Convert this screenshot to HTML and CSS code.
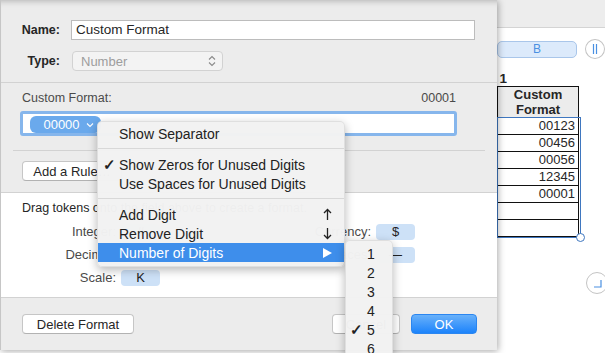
FILE: index.html
```html
<!DOCTYPE html>
<html lang="en">

<head>
  <meta charset="UTF-8">
  <title>Custom Format</title>
  <link rel="stylesheet" href="styles.css">
</head>

<body>
  <!-- spreadsheet behind the sheet -->
  <div class="canvas">
    <div class="toolbar"></div>
    <div class="col-row">
      <div class="col-pill">B</div>
      <div class="round-btn">
        <svg width="10" height="12" viewBox="0 0 10 12"><path d="M3.5 1v10M6.5 1v10" stroke="#4a90e2" stroke-width="1.2" fill="none"/></svg>
      </div>
    </div>
    <div class="table-title">Table 1</div>
    <div class="table-wrap">
      <table class="grid">
        <tr class="head"><td></td><td>Custom<br>Format</td></tr>
        <tr><td></td><td>00123</td></tr>
        <tr><td></td><td>00456</td></tr>
        <tr><td></td><td>00056</td></tr>
        <tr><td></td><td>12345</td></tr>
        <tr><td></td><td>00001</td></tr>
        <tr><td></td><td></td></tr>
        <tr><td></td><td></td></tr>
      </table>
      <div class="selection"><span class="handle"></span></div>
    </div>
    <div class="round-btn corner">
      <svg width="12" height="12" viewBox="0 0 12 12"><path d="M10 3v7H3" stroke="#4a90e2" stroke-width="1.2" fill="none"/></svg>
    </div>
  </div>

  <!-- format sheet -->
  <div class="dialog">
    <div class="field-row">
      <span class="label">Name:</span>
      <div class="text-field">Custom Format</div>
    </div>
    <div class="field-row type-row">
      <span class="label">Type:</span>
      <div class="popup">
        <span>Number</span>
        <svg width="8" height="12" viewBox="0 0 8 12"><path d="M1 4.5L4 1.5L7 4.5M1 7.5L4 10.5L7 7.5" stroke="#8a8a8a" stroke-width="1.1" fill="none"/></svg>
      </div>
    </div>
    <div class="rule"></div>
    <div class="format-head">
      <span>Custom Format:</span>
      <span>00001</span>
    </div>
    <div class="token-field">
      <span class="token selected">00000
        <svg width="8" height="6" viewBox="0 0 8 6"><path d="M1 1.5L4 4.5L7 1.5" stroke="#fff" stroke-width="1.1" fill="none"/></svg>
      </span>
    </div>
    <div class="rule inset"></div>
    <div class="rule-row"><button class="btn add-rule">Add a Rule…</button></div>
    <div class="token-panel">
      <p class="hint">Drag tokens onto the field above to create a format.</p>
      <div class="token-grid">
        <span class="tk-label">Integer:</span><span class="token">#</span>
        <span class="tk-label">Currency:</span><span class="token">$</span>
        <span class="tk-label">Decimal:</span><span class="token">#</span>
        <span class="tk-label">Spaces:</span><span class="token">—</span>
        <span class="tk-label">Scale:</span><span class="token">K</span>
      </div>
    </div>
    <div class="footer">
      <button class="btn delete">Delete Format</button>
      <button class="btn cancel">Cancel</button>
      <button class="btn primary">OK</button>
    </div>
  </div>

  <!-- token popup menu -->
  <div class="menu">
    <div class="menu-item"><span class="check"></span>Show Separator</div>
    <div class="menu-sep"></div>
    <div class="menu-item"><span class="check">✓</span>Show Zeros for Unused Digits</div>
    <div class="menu-item"><span class="check"></span>Use Spaces for Unused Digits</div>
    <div class="menu-sep"></div>
    <div class="menu-item"><span class="check"></span>Add Digit
      <span class="key"><svg width="9" height="13" viewBox="0 0 9 13"><path d="M4.5 12V1.5M1 5L4.5 1.5L8 5" stroke="#222" stroke-width="1.3" fill="none"/></svg></span>
    </div>
    <div class="menu-item"><span class="check"></span>Remove Digit
      <span class="key"><svg width="9" height="13" viewBox="0 0 9 13"><path d="M4.5 1v10.5M1 8L4.5 11.5L8 8" stroke="#222" stroke-width="1.3" fill="none"/></svg></span>
    </div>
    <div class="menu-item active"><span class="check"></span>Number of Digits
      <span class="key"><svg width="9" height="10" viewBox="0 0 9 10"><path d="M0 0L9 5L0 10Z" fill="#fff"/></svg></span>
    </div>
  </div>
  <div class="submenu">
    <div class="menu-item"><span class="check"></span>1</div>
    <div class="menu-item"><span class="check"></span>2</div>
    <div class="menu-item"><span class="check"></span>3</div>
    <div class="menu-item"><span class="check"></span>4</div>
    <div class="menu-item"><span class="check">✓</span>5</div>
    <div class="menu-item"><span class="check"></span>6</div>
  </div>
</body>

</html>
```

FILE: styles.css
```css
body {
  margin: 0;
  width: 605px;
  height: 353px;
  overflow: hidden;
  position: relative;
  background: #fff;
  font-family: 'Liberation Sans', Arial, sans-serif;
  font-size: 13px;
  color: #262626;
}

/* spreadsheet */
.canvas {
  padding-left: 497px;
}

.toolbar {
  height: 27px;
  margin-left: -497px;
  background: #ededed;
  border-bottom: 1px solid #d4d4d4;
}

.col-row {
  display: flex;
  align-items: center;
  margin-top: 10px;
  height: 22px;
}

.col-pill {
  width: 81px;
  height: 17px;
  box-sizing: border-box;
  border: 1px solid #a9c6ea;
  border-radius: 5px;
  background: #dceafb;
  color: #4a90e2;
  font-size: 12px;
  line-height: 15px;
  text-align: center;
}

.round-btn {
  width: 20px;
  height: 20px;
  box-sizing: border-box;
  border: 1px solid #c4c4c4;
  border-radius: 50%;
  background: #fff;
  display: flex;
  align-items: center;
  justify-content: center;
  margin-left: 8px;
}

.round-btn.corner {
  margin-left: 89px;
  margin-top: 35px;
  width: 22px;
  height: 22px;
}

.table-title {
  width: 56px;
  margin-left: -46px;
  margin-top: 11px;
  text-align: right;
  font-weight: bold;
  font-size: 13.5px;
  line-height: 15px;
}

.table-wrap {
  position: relative;
  margin-left: -20px;
  width: 102px;
}

.grid {
  border-collapse: collapse;
  font-size: 13px;
}

.grid td {
  border: 1px solid #111;
  height: 16px;
  padding: 0 3px 0 0;
  text-align: right;
  line-height: 16px;
}

.grid td:first-child {
  width: 16px;
}

.grid td:last-child {
  width: 77px;
}

.grid .head td {
  height: 30px;
  background: #ececec;
  font-weight: bold;
  text-align: center;
  line-height: 15px;
  padding: 0;
}

.selection {
  position: absolute;
  left: 20px;
  top: 31px;
  width: 82px;
  height: 119px;
  border: 1px solid #3f77c0;
}

.handle {
  position: absolute;
  right: -5px;
  bottom: -5px;
  width: 7px;
  height: 7px;
  border: 1px solid #3f77c0;
  border-radius: 50%;
  background: #fff;
}

/* sheet */
.dialog {
  position: absolute;
  left: 0;
  top: 0;
  width: 497px;
  height: 350px;
  box-sizing: border-box;
  border-left: 1px solid #c6c6c6;
  background: #ececec;
  box-shadow: inset 0 7px 6px -6px rgba(0, 0, 0, 0.25), 1px 1px 7px rgba(0, 0, 0, 0.35);
  display: flex;
  flex-direction: column;
  padding-top: 20px;
}

.field-row {
  display: flex;
  align-items: center;
  height: 20px;
}

.type-row {
  margin-top: 11px;
}

.label {
  width: 59px;
  text-align: right;
  font-weight: bold;
  font-size: 12.5px;
  margin-right: 11px;
}

.text-field {
  width: 404px;
  height: 20px;
  box-sizing: border-box;
  background: #fff;
  border: 1px solid #bcbcbc;
  padding-left: 4px;
  line-height: 18px;
  font-size: 13.5px;
}

.popup {
  width: 151px;
  height: 20px;
  margin-left: 1px;
  box-sizing: border-box;
  border: 1px solid #d2d2d2;
  border-radius: 4px;
  background: #f3f3f3;
  color: #9d9d9d;
  display: flex;
  align-items: center;
  justify-content: space-between;
  padding: 0 6px 0 8px;
  font-size: 13px;
}

.rule {
  height: 1px;
  background: #d2d2d2;
  margin-top: 11px;
}

.rule.inset {
  margin: 14px 12px 0 12px;
}

.format-head {
  display: flex;
  justify-content: space-between;
  margin-top: 8px;
  padding: 0 41px 0 21px;
  line-height: 14px;
  color: #4a4a4a;
  font-size: 12.5px;
}

.token-field {
  margin: 6px 0 0 19px;
  width: 437px;
  height: 25px;
  box-sizing: border-box;
  border: 3px solid #86b6ec;
  border-radius: 3px;
  background: #fff;
  display: flex;
  align-items: flex-start;
}

.token {
  height: 16px;
  border-radius: 4px;
  background: #cde1f7;
  text-align: center;
  line-height: 16px;
  font-size: 13px;
  color: #222;
}

.token.selected {
  margin: 2px 0 0 7px;
  width: 71px;
  height: 17px;
  line-height: 17px;
  background: #6aa9ec;
  color: #fff;
  border-radius: 6px;
  display: flex;
  align-items: center;
  justify-content: center;
  gap: 6px;
  padding-left: 6px;
  box-sizing: border-box;
}

.rule-row {
  margin: 10px 0 0 21px;
}

.btn {
  height: 20px;
  box-sizing: border-box;
  border: 1px solid #c6c6c6;
  border-bottom-color: #b2b2b2;
  border-radius: 4px;
  background: #fff;
  font-family: inherit;
  font-size: 13px;
  color: #262626;
  padding: 0;
}

.add-rule {
  width: 100px;
}

.token-panel {
  margin-top: 11px;
  height: 106px;
  box-sizing: border-box;
  background: #fff;
  border-top: 1px solid #d2d2d2;
  border-bottom: 1px solid #d2d2d2;
  padding-top: 8px;
}

.hint {
  margin: 0 0 9px 21px;
  line-height: 14px;
  font-size: 12.5px;
}

.token-grid {
  display: grid;
  grid-template-columns: 115px 39px 206px 39px;
  column-gap: 5px;
  row-gap: 7px;
  grid-auto-rows: 16px;
}

.tk-label {
  text-align: right;
  line-height: 16px;
  color: #4a4a4a;
}

.footer {
  display: flex;
  padding: 16px 20px 0 21px;
}

.delete {
  width: 112px;
}

.cancel {
  width: 68px;
  margin-left: auto;
  margin-right: 11px;
}

.primary {
  width: 66px;
  border: 1px solid #2b86f0;
  background: linear-gradient(#69b1fa, #1c83fb);
  color: #fff;
}

/* menus */
.menu,
.submenu {
  position: absolute;
  box-sizing: border-box;
  background: rgba(242, 242, 242, 0.98);
  border: 1px solid rgba(0, 0, 0, 0.08);
  border-radius: 5px;
  box-shadow: 0 3px 10px rgba(0, 0, 0, 0.28);
  font-size: 14px;
  color: #222;
}

.menu {
  left: 97px;
  top: 121px;
  width: 248px;
  height: 146px;
  padding-top: 2px;
}

.submenu {
  left: 345px;
  top: 240px;
  width: 48px;
  height: 130px;
  padding-top: 3px;
}

.menu-item {
  display: flex;
  align-items: center;
  height: 19px;
  padding: 0 12px 0 5px;
}

.check {
  width: 16px;
  flex: none;
  font-size: 15px;
  font-weight: bold;
  line-height: 19px;
}

.submenu .menu-item {
  padding-left: 4px;
}

.submenu .check {
  width: 17px;
}

.key {
  margin-left: auto;
  width: 10px;
  display: flex;
  justify-content: center;
}

.menu-item.active {
  background: #3e8eeb;
  color: #fff;
}

.menu-sep {
  height: 1px;
  margin: 5px 0 6px;
  background: #d8d8d8;
}
```
